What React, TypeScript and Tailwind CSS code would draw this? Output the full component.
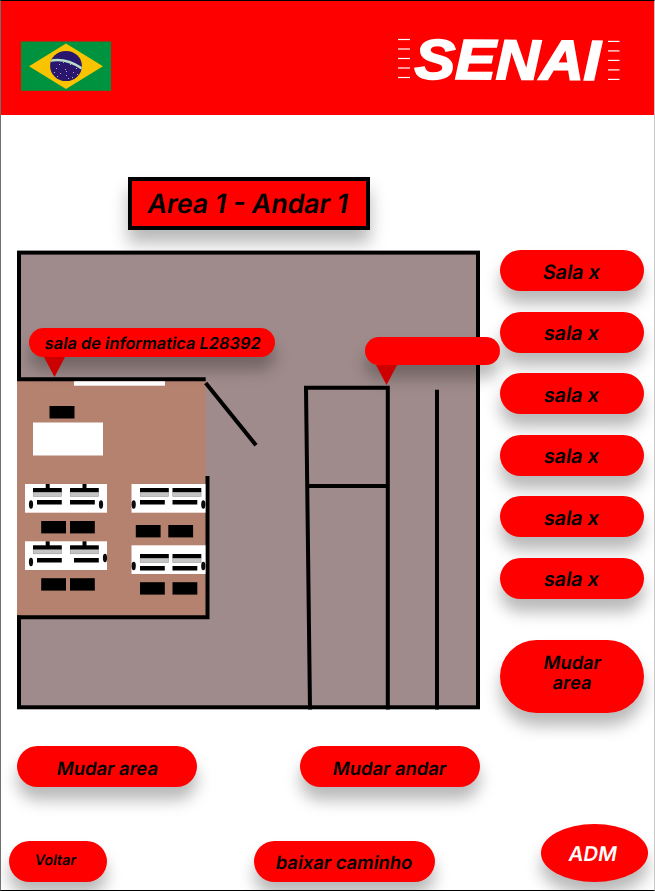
import type { ReactNode } from "react";
import clsx from "clsx";

const SHADOW = "shadow-[0_13px_16px_rgba(0,0,0,0.28)]";

function Slanted({ children }: { children?: ReactNode }) {
  return <span className="inline-block -skew-x-[9.5deg]">{children}</span>;
}

function Pill({ children, className }: { children?: ReactNode; className?: string }) {
  return (
    <button
      className={clsx(
        "flex shrink-0 flex-col items-center justify-center bg-[#ff0000] font-semibold text-black",
        SHADOW,
        className,
      )}
    >
      {children}
    </button>
  );
}

function Flag() {
  const stars = [
    [56, 68], [60, 73], [65, 69], [66, 75], [70, 64], [73, 72], [59, 64], [76, 68],
    [54, 72], [63, 62], [68, 78], [72, 77], [66, 71], [77, 74], [57, 76],
  ];
  return (
    <svg className="h-[50px] w-[90px]" viewBox="21 41 90 50">
      <rect x="21" y="41.5" width="90" height="49.3" fill="#00933f" />
      <path d="M29 66.2 66 43.6 103 66.2 66 89z" fill="#f9c300" />
      <clipPath id="globe">
        <ellipse cx="66" cy="66" rx="15.9" ry="15.1" />
      </clipPath>
      <g clipPath="url(#globe)">
        <rect x="50" y="50" width="32" height="32" fill="#2b166d" />
        <path d="M49 61Q66 57 83 69.2" fill="none" stroke="#b9dccb" strokeWidth="2.4" />
        {stars.map(([x, y]) => (
          <rect key={`${x}-${y}`} x={x} y={y} width="1" height="1" fill="#b5a9cf" />
        ))}
      </g>
    </svg>
  );
}

function Logo() {
  const rungs = [0, 9.5, 19, 28.5, 38];
  return (
    <svg className="h-[80px] w-[230px] overflow-visible" viewBox="395 20 230 80">
      {rungs.map((d) => (
        <g key={d} stroke="#fff" strokeWidth="1.2">
          <path d={`M398 ${39.5 + d}h12`} />
          <path d={`M608 ${41.4 + d}h11.5`} />
        </g>
      ))}
      <text
        x="414.5"
        y="78.4"
        transform="rotate(0.45 415 79)"
        textLength="186"
        lengthAdjust="spacingAndGlyphs"
        fill="#fff"
        stroke="#fff"
        strokeWidth="1.9"
        fontSize="56"
        fontWeight="700"
        fontStyle="italic"
        fontFamily="Liberation Sans, Arial, sans-serif"
      >
        SENAI
      </text>
    </svg>
  );
}

type Desk = {
  x: number;
  y: number;
  w: number;
  screens: number[];
  screenY: number;
  keys: number[];
  keyY: number;
  mice: number[][];
  necks?: number[];
  chairs: number[];
  chairY: number;
};

const desks: Desk[] = [
  { x: 25, y: 484, w: 82, screens: [33, 70], screenY: 488, keys: [37, 70], keyY: 500, mice: [[31, 504.5], [101, 504.5]], necks: [45.7, 82.5], chairs: [41.2, 70], chairY: 521 },
  { x: 25, y: 541.3, w: 82, screens: [33, 70], screenY: 545.3, keys: [37, 74], keyY: 558, mice: [[31, 562], [105, 558]], necks: [45.7, 82.5], chairs: [41.2, 70], chairY: 578.2 },
  { x: 131.5, y: 484, w: 74, screens: [140, 172.5], screenY: 488, keys: [140, 172.5], keyY: 500, mice: [[133.7, 504.5], [203.3, 504.5]], chairs: [135.8, 168.3], chairY: 525 },
  { x: 131.5, y: 545.3, w: 74, screens: [140, 172.5], screenY: 554, keys: [140, 172.5], keyY: 566, mice: [[133.7, 566], [203.3, 566]], chairs: [140, 172.5], chairY: 582.2 },
];

function DeskShape({ d }: { d: Desk }) {
  return (
    <g>
      <rect x={d.x} y={d.y} width={d.w} height="28.7" fill="#fff" />
      {d.necks?.map((x) => <rect key={x} x={x} y={d.y} width="4" height="5" />)}
      {d.screens.map((x) => (
        <g key={x}>
          <rect x={x + 0.25} y={d.screenY + 4} width="28.3" height="4.5" fill="#c4c4c4" stroke="#999" strokeWidth="0.6" />
          <rect x={x} y={d.screenY} width="28.8" height="4.1" />
        </g>
      ))}
      {d.keys.map((x) => <rect key={x} x={x} y={d.keyY} width="24.8" height="4.5" />)}
      {d.mice.map(([x, y]) => <ellipse key={x} cx={x} cy={y} rx="2.1" ry="4.2" fill="#0b0b0b" />)}
      {d.chairs.map((x) => <rect key={x} x={x} y={d.chairY} width="24.8" height="12.4" />)}
    </g>
  );
}

function FloorPlan() {
  return (
    <svg className="block h-[460px] w-[463px]" viewBox="17 250 463 460">
      <rect x="19" y="252.6" width="459" height="454.7" fill="#9f8b8b" stroke="#000" strokeWidth="4" />
      <rect x="17" y="381" width="188.7" height="234.5" fill="#b58270" />
      <g fill="none" stroke="#000" strokeWidth="4">
        <path d="M17 379.3H205.7" />
        <path d="M205.7 383 256 445.2" />
        <path d="M207.5 476V617.2H17" />
        <path d="M310 709.5 306 387.7H387.8V709.5" />
        <path d="M308 486H388" />
        <path d="M437 389.7V709.5" />
      </g>
      <rect x="74" y="381.3" width="91" height="4.4" fill="#fff" />
      <rect x="49.5" y="406" width="25" height="12.5" />
      <rect x="33" y="422.5" width="70" height="33" fill="#fff" />
      {desks.map((d) => <DeskShape key={`${d.x}-${d.y}`} d={d} />)}
    </svg>
  );
}

function Callout({ children, className, tip }: { children?: ReactNode; className: string; tip: string }) {
  return (
    <div className={clsx("absolute", className)}>
      <div className={clsx("flex h-[28.7px] items-center justify-center rounded-full bg-[#ff0000] pt-px pl-[2px] text-[16.4px] font-semibold whitespace-nowrap", SHADOW)}>
        <Slanted>{children}</Slanted>
      </div>
      <svg className={clsx("block h-5 w-[21px]", tip)} viewBox="0 0 21 20">
        <path d="M0 0H21L10.5 20z" fill="#cc0000" />
      </svg>
    </div>
  );
}

export default function App() {
  const rooms = ["Sala x", "sala x", "sala x", "sala x", "sala x", "sala x"];
  return (
    <main className="flex h-[891px] w-[655px] flex-col overflow-hidden border border-t-black border-r-[#c8c8c8] border-b-black border-l-[#707070] bg-white font-[Inter,sans-serif] text-black [font-optical-sizing:none]">
      <header className="flex h-[114px] shrink-0 items-start justify-between bg-[#ff0000] pr-[29px] pl-5">
        <div className="pt-10">
          <Flag />
        </div>
        <div className="pt-[19px]">
          <Logo />
        </div>
      </header>

      <h1
        className={clsx(
          "mt-[62px] ml-[126.5px] flex h-[53px] w-[242px] shrink-0 items-center justify-center border-4 border-black bg-[#ff0000] pt-px pr-px text-[26.6px] font-semibold whitespace-nowrap",
          SHADOW,
        )}
      >
        <Slanted>Area 1 - Andar 1</Slanted>
      </h1>

      <section className="mt-5 flex h-[460px] shrink-0 gap-[20.4px] pl-4">
        <div className="relative shrink-0">
          <FloorPlan />
          <Callout className="top-[78px] left-[12px] w-[246px]" tip="ml-[15px]">
            sala de informatica L28392
          </Callout>
          <Callout className="top-[86.5px] left-[348px] w-[135.4px]" tip="ml-[10.8px]" />
        </div>
        <nav className="flex flex-col gap-[20.5px] pt-[0.4px]">
          {rooms.map((room, i) => (
            <Pill key={i} className="h-[41px] w-[143.5px] rounded-full pt-[3px] pr-px text-[19.8px]">
              <Slanted>{room}</Slanted>
            </Pill>
          ))}
          <Pill className="mt-[20.5px] h-[73.5px] w-[143.5px] rounded-[37px] pb-[9px] text-[18.3px] leading-[20.5px]">
            <Slanted>Mudar</Slanted>
            <Slanted>area</Slanted>
          </Pill>
        </nav>
      </section>

      <div className="mt-[36.3px] flex shrink-0 gap-[102.7px] pl-4">
        <Pill className="h-[41px] w-[180.3px] rounded-full pt-[4px] text-[18.4px]">
          <Slanted>Mudar area</Slanted>
        </Pill>
        <Pill className="h-[41px] w-[180.3px] rounded-full pt-[4px] text-[18.4px]">
          <Slanted>Mudar andar</Slanted>
        </Pill>
      </div>

      <footer className="mt-[37px] flex shrink-0 items-end pl-[7.8px]">
        <Pill className="h-[41px] w-[98.3px] rounded-full pr-[4px] pb-[2px] text-[14.3px]">
          <Slanted>Voltar</Slanted>
        </Pill>
        <Pill className="ml-[147.4px] h-[41px] w-[180.3px] rounded-full pt-[4px] text-[18.4px]">
          <Slanted>baixar caminho</Slanted>
        </Pill>
        <Pill className="ml-[106.7px] h-[57.4px] w-[106.6px] rounded-[50%] pr-1 pt-[3px] text-[20.3px] text-white">
          <Slanted>ADM</Slanted>
        </Pill>
      </footer>
    </main>
  );
}
